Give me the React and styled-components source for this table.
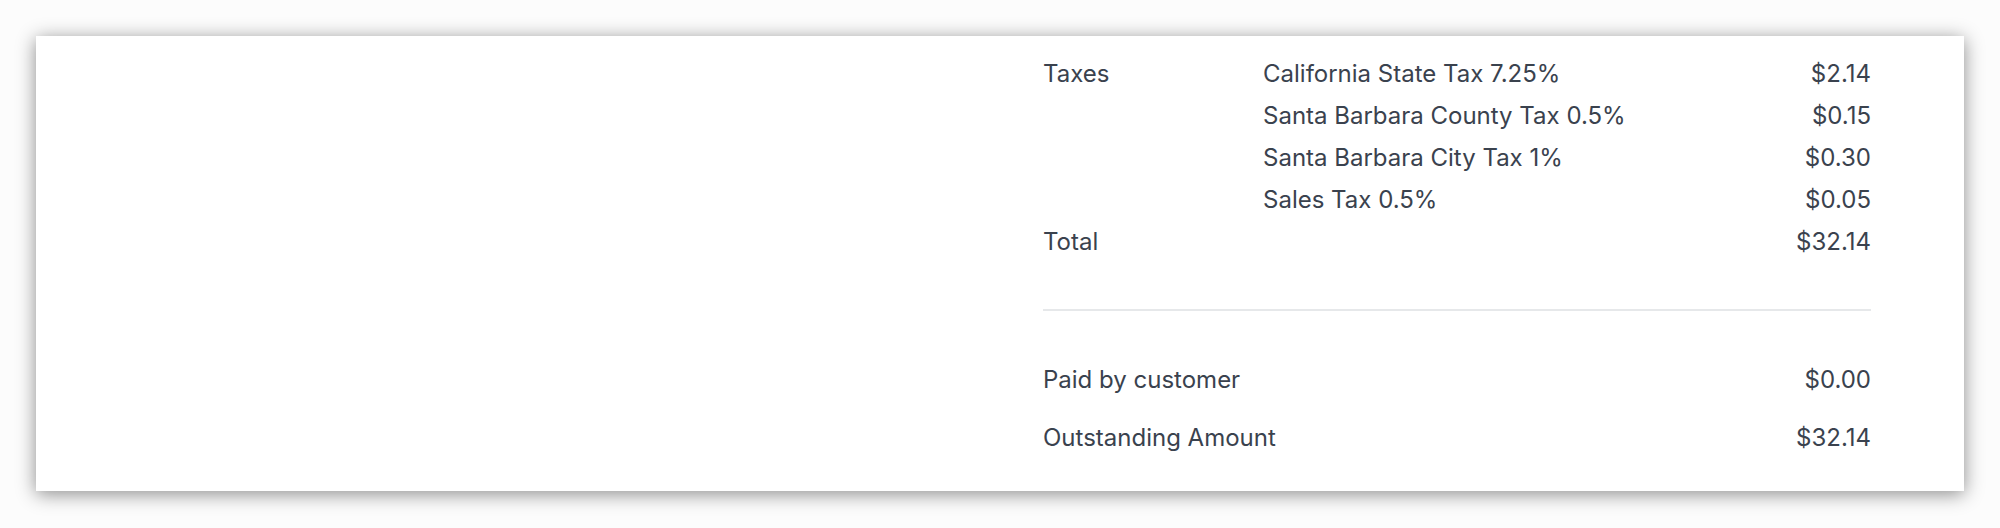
import React from "react";
import styled, { createGlobalStyle } from "styled-components";

const Global = createGlobalStyle`
  html, body { margin: 0; padding: 0; background: #ffffff; }
  body { font-family: Inter, "Helvetica Neue", Arial, sans-serif; }
`;

const Page = styled.div`
  width: 2000px;
  height: 528px;
  box-sizing: border-box;
  padding: 36px 36px 37px 36px;
  background: #fcfcfc;
`;

const Card = styled.div`
  height: 100%;
  box-sizing: border-box;
  background: #ffffff;
  box-shadow: 0 3px 18px rgba(0, 0, 0, 0.45);
  display: flex;
  justify-content: flex-end;
  padding: 16px 93px 0 0;
`;

const Summary = styled.div`
  width: 828px;
  display: flex;
  flex-direction: column;
  color: #3a424e;
  font-size: 24px;
`;

const Row = styled.div`
  display: grid;
  grid-template-columns: 220px 1fr auto;
  align-items: center;
  height: ${(p) => p.$h || 42}px;
`;

const Label = styled.span``;
const Name = styled.span``;
const Amount = styled.span`
  text-align: right;
`;

const Divider = styled.hr`
  border: 0;
  border-top: 2px solid #e6e8ea;
  margin: 47px 0 47px 0;
`;

const TotalRow = styled.div`
  display: flex;
  justify-content: space-between;
  align-items: center;
  height: 42px;
  margin-bottom: ${(p) => p.$mb || 0}px;
`;

const taxes = [
  ["California State Tax 7.25%", "$2.14"],
  ["Santa Barbara County Tax 0.5%", "$0.15"],
  ["Santa Barbara City Tax 1%", "$0.30"],
  ["Sales Tax 0.5%", "$0.05"],
];

export default function App() {
  return (
    <>
      <Global />
      <Page>
        <Card>
          <Summary>
            {taxes.map(([name, amt], i) => (
              <Row key={name}>
                <Label>{i === 0 ? "Taxes" : ""}</Label>
                <Name>{name}</Name>
                <Amount>{amt}</Amount>
              </Row>
            ))}
            <Row>
              <Label>Total</Label>
              <Name />
              <Amount>$32.14</Amount>
            </Row>
            <Divider />
            <TotalRow $mb={16}>
              <Label>Paid by customer</Label>
              <Amount>$0.00</Amount>
            </TotalRow>
            <TotalRow>
              <Label>Outstanding Amount</Label>
              <Amount>$32.14</Amount>
            </TotalRow>
          </Summary>
        </Card>
      </Page>
    </>
  );
}
